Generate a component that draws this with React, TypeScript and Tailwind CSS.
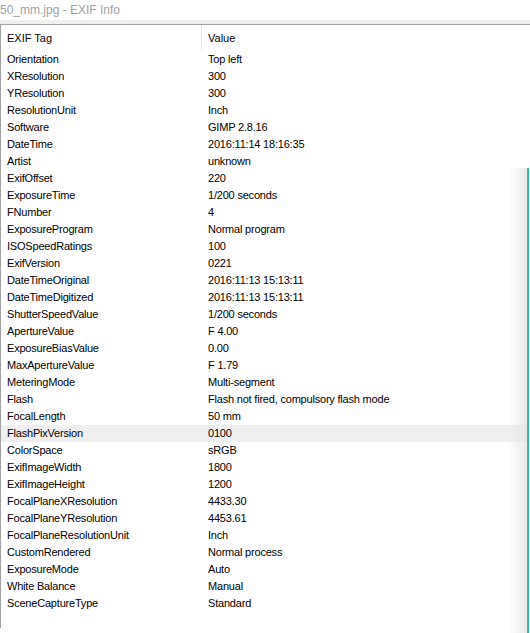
const rows: [string, string][] = [
  ['Orientation', 'Top left'],
  ['XResolution', '300'],
  ['YResolution', '300'],
  ['ResolutionUnit', 'Inch'],
  ['Software', 'GIMP 2.8.16'],
  ['DateTime', '2016:11:14 18:16:35'],
  ['Artist', 'unknown'],
  ['ExifOffset', '220'],
  ['ExposureTime', '1/200 seconds'],
  ['FNumber', '4'],
  ['ExposureProgram', 'Normal program'],
  ['ISOSpeedRatings', '100'],
  ['ExifVersion', '0221'],
  ['DateTimeOriginal', '2016:11:13 15:13:11'],
  ['DateTimeDigitized', '2016:11:13 15:13:11'],
  ['ShutterSpeedValue', '1/200 seconds'],
  ['ApertureValue', 'F 4.00'],
  ['ExposureBiasValue', '0.00'],
  ['MaxApertureValue', 'F 1.79'],
  ['MeteringMode', 'Multi-segment'],
  ['Flash', 'Flash not fired, compulsory flash mode'],
  ['FocalLength', '50 mm'],
  ['FlashPixVersion', '0100'],
  ['ColorSpace', 'sRGB'],
  ['ExifImageWidth', '1800'],
  ['ExifImageHeight', '1200'],
  ['FocalPlaneXResolution', '4433.30'],
  ['FocalPlaneYResolution', '4453.61'],
  ['FocalPlaneResolutionUnit', 'Inch'],
  ['CustomRendered', 'Normal process'],
  ['ExposureMode', 'Auto'],
  ['White Balance', 'Manual'],
  ['SceneCaptureType', 'Standard'],
]

export default function App() {
  return (
    <div
      className="relative h-[633px] w-[530px] overflow-hidden bg-white text-[11px] text-black"
      style={{ fontFamily: '"Liberation Sans", Arial, sans-serif' }}
    >
      <div className="flex h-[20px] items-center text-[12px] leading-none text-[#a0a0a0]">
        50_mm.jpg - EXIF Info
      </div>
      <div className="h-[5px] border-b border-[#a0a0a0] bg-[#f0f0f0]" />
      <div className="flex flex-col border-l border-[#a0a0a0]">
        <div className="flex h-[26px] items-center">
          <div className="w-[200px] pl-[6px]">EXIF Tag</div>
          <div className="h-full w-px bg-[#e5e5e5]" />
          <div className="pl-[6px]">Value</div>
        </div>
        {rows.map(([tag, value]) => (
          <div
            key={tag}
            className={`flex h-[17px] items-center tracking-[-0.2px] ${tag === 'FlashPixVersion' ? 'bg-[#efefef]' : ''}`}
          >
            <div className="w-[201px] pl-[6px]">{tag}</div>
            <div className="pl-[6px]">{value}</div>
          </div>
        ))}
        <div className="h-[16px]" />
      </div>
      <div className="pl-[6px] pt-[4px]">Thumbnail</div>
      <div className="absolute right-0 top-[168px] h-[465px] w-[22px] bg-gradient-to-r from-transparent to-[#e6e6e6]" />
      <div className="absolute right-[1px] top-[168px] h-[465px] w-[2px] bg-[#3cb8a6]" />
    </div>
  )
}
